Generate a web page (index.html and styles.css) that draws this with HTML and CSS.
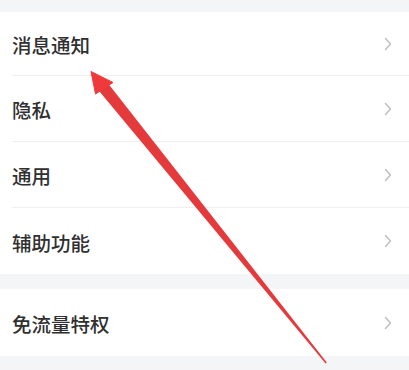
FILE: index.html
```html
<!DOCTYPE html>
<html lang="zh-CN">
<head>
<meta charset="utf-8">
<title>设置</title>
<link rel="stylesheet" href="styles.css">
</head>
<body>
<div class="page">
  <div class="group">
    <div class="row first"><span class="label">消息通知</span><svg class="chev" viewBox="0 0 8 14" width="8" height="14"><polyline points="1.5,1.5 6.5,7 1.5,12.5"/></svg></div>
    <div class="row"><span class="label">隐私</span><svg class="chev" viewBox="0 0 8 14" width="8" height="14"><polyline points="1.5,1.5 6.5,7 1.5,12.5"/></svg></div>
    <div class="row"><span class="label">通用</span><svg class="chev" viewBox="0 0 8 14" width="8" height="14"><polyline points="1.5,1.5 6.5,7 1.5,12.5"/></svg></div>
    <div class="row"><span class="label">辅助功能</span><svg class="chev" viewBox="0 0 8 14" width="8" height="14"><polyline points="1.5,1.5 6.5,7 1.5,12.5"/></svg></div>
  </div>
  <div class="group">
    <div class="row tall"><span class="label">免流量特权</span><svg class="chev" viewBox="0 0 8 14" width="8" height="14"><polyline points="1.5,1.5 6.5,7 1.5,12.5"/></svg></div>
  </div>
</div>
<svg class="arrow" viewBox="0 0 409 370" width="409" height="370">
  <polygon class="shaft" points="108.5,84 99.5,91.5 325.6,363.4 326.8,362.6"/>
  <polygon class="head" points="91,71.5 113,82.5 95.5,94"/>
</svg>
</body>
</html>
```
FILE: styles.css
```css
html, body {
  margin: 0;
  padding: 0;
  background: #f4f5f7;
  width: 409px;
  height: 370px;
  overflow: hidden;
}
body {
  position: relative;
  font-family: "Noto Sans CJK SC", "Noto Sans", sans-serif;
}
.page {
  padding-top: 12px;
  display: flex;
  flex-direction: column;
  gap: 15px;
}
.group {
  background: #ffffff;
}
.row {
  box-sizing: border-box;
  height: 66px;
  margin-left: 12px;
  padding-right: 17px;
  display: flex;
  align-items: center;
  justify-content: space-between;
  border-bottom: 1px solid #efefef;
}
.row.first {
  height: 64px;
}
.row:last-child {
  border-bottom: none;
}
.row.tall {
  height: 67px;
}
.label {
  font-size: 19.5px;
  font-weight: 500;
  color: #303030;
  line-height: 1;
  padding-top: 3px;
}
.chev {
  fill: none;
  stroke: #bdbdbd;
  stroke-width: 1.4;
  stroke-linecap: round;
  stroke-linejoin: round;
}
.arrow {
  position: absolute;
  left: 0;
  top: 0;
  pointer-events: none;
}
.shaft {
  fill: #e53a3c;
}
.head {
  fill: #f0393b;
  stroke: #f0393b;
  stroke-width: 1;
  stroke-linejoin: round;
}
```
